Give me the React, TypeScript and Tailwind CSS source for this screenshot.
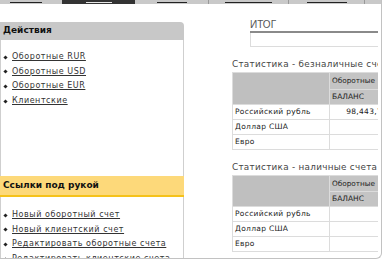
import React from "react";

const actions = ["Оборотные RUR", "Оборотные USD", "Оборотные EUR", "Клиентские"];
const quick = [
  "Новый оборотный счет",
  "Новый клиентский счет",
  "Редактировать оборотные счета",
  "Редактировать клиентские счета",
];

const LinkItem = ({ label }: { label: string }) => (
  <div className="h-[14.6px] flex items-center">
    <span className="ml-[3px] w-[3px] h-[3px] rotate-45 bg-[#222] shrink-0" />
    <a className="ml-[5px] text-[8px] leading-none tracking-[0.55px] text-[#333] underline underline-offset-[1px] whitespace-nowrap">
      {label}
    </a>
  </div>
);

const TopBar = () => (
  <div className="h-[4px] flex bg-[#c9c9c9] shrink-0">
    <div className="w-[62px] flex items-center">
      <div className="ml-[10px] w-[32px] h-px bg-[#222]" />
    </div>
    <div className="w-[73px] bg-[#333] flex items-center">
      <div className="ml-[24px] w-[26px] h-px bg-[#e6e6e6]" />
    </div>
    <div className="w-[74px] flex items-center border-r border-[#999]">
      <div className="ml-[22px] w-[30px] h-px bg-[#222]" />
    </div>
    <div className="w-[80px] flex items-center border-r border-[#999]">
      <div className="ml-[16px] w-[47px] h-px bg-[#222]" />
    </div>
    <div className="w-[76px] flex items-center border-r border-[#999]">
      <div className="ml-[18px] w-[40px] h-px bg-[#222]" />
    </div>
    <div className="flex-1" />
  </div>
);

const StatTable = ({ title, value }: { title: string; value?: string }) => (
  <div>
    <div className="text-[8.8px] leading-[11px] text-[#444] tracking-[0.3px] whitespace-nowrap">{title}</div>
    <table className="mt-[2px] w-[175px] min-w-[175px] table-fixed border-collapse text-[7.5px] text-[#222] leading-none">
      <colgroup>
        <col className="w-[97px]" />
        <col className="w-[78px]" />
      </colgroup>
      <tbody>
        <tr>
          <td rowSpan={2} className="bg-[#bfbfbf] border border-[#dcdcdc]" />
          <td className="h-[16.5px] bg-[#c4c4c4] border border-[#dcdcdc] pl-[2px] whitespace-nowrap text-[7.3px]">Оборотные</td>
        </tr>
        <tr>
          <td className="h-[15px] bg-[#c4c4c4] border border-[#dcdcdc] pl-[2px]">БАЛАНС</td>
        </tr>
        {["Российский рубль", "Доллар США", "Евро"].map((r, i) => (
          <tr key={r}>
            <td className="h-[15px] border border-[#dcdcdc] pl-[2px] whitespace-nowrap tracking-[0.3px]">{r}</td>
            <td className="border border-[#dcdcdc] text-right pr-[2px] whitespace-nowrap tracking-[0.3px]">{i === 0 ? value : ""}</td>
          </tr>
        ))}
      </tbody>
    </table>
  </div>
);

export default function App() {
  return (
    <div className="w-[384px] h-[261px] overflow-hidden bg-white font-['DejaVu_Sans',sans-serif]">
      <div className="w-[382px] h-[259px] border-r border-b border-[#c2c2c2] rounded-br-[6px] flex flex-col overflow-hidden">
        <TopBar />
        <div className="flex flex-1 min-h-0">
          <div className="w-[184px] shrink-0 pt-[18px]">
            <div className="h-[18px] bg-[#c8c8c8] rounded-tr-[4px] flex items-center pl-[3px] text-[9px] font-bold text-[#111]">
              Действия
            </div>
            <div className="h-[136px] border-l border-r border-[#cfcfcf] pt-[10px]">
              {actions.map((a) => (
                <LinkItem key={a} label={a} />
              ))}
            </div>
            <div className="h-[21px] bg-[#fdd97a] border-b-2 border-[#f5c21b] flex items-center pl-[3px] text-[9px] font-bold text-[#111]">
              Ссылки под рукой
            </div>
            <div className="h-[80px] border-l border-r border-[#cfcfcf] pt-[11px]">
              {quick.map((a) => (
                <LinkItem key={a} label={a} />
              ))}
            </div>
          </div>
          <div className="w-[194px] shrink-0 overflow-hidden">
            <div className="ml-[66px] mt-[15px]">
              <div className="text-[10px] leading-[12px] text-[#555] font-['Liberation_Sans',sans-serif]">ИТОГ</div>
              <div className="h-[2px] bg-[#8a8a8a]" />
              <div className="h-[14px] border-l border-b border-[#dcdcdc]" />
            </div>
            <div className="ml-[48px] mt-[12px]">
              <StatTable title="Статистика - безналичные счета" value="98,443,750.00" />
            </div>
            <div className="ml-[48px] mt-[12px]">
              <StatTable title="Статистика - наличные счета" />
            </div>
          </div>
        </div>
      </div>
    </div>
  );
}
